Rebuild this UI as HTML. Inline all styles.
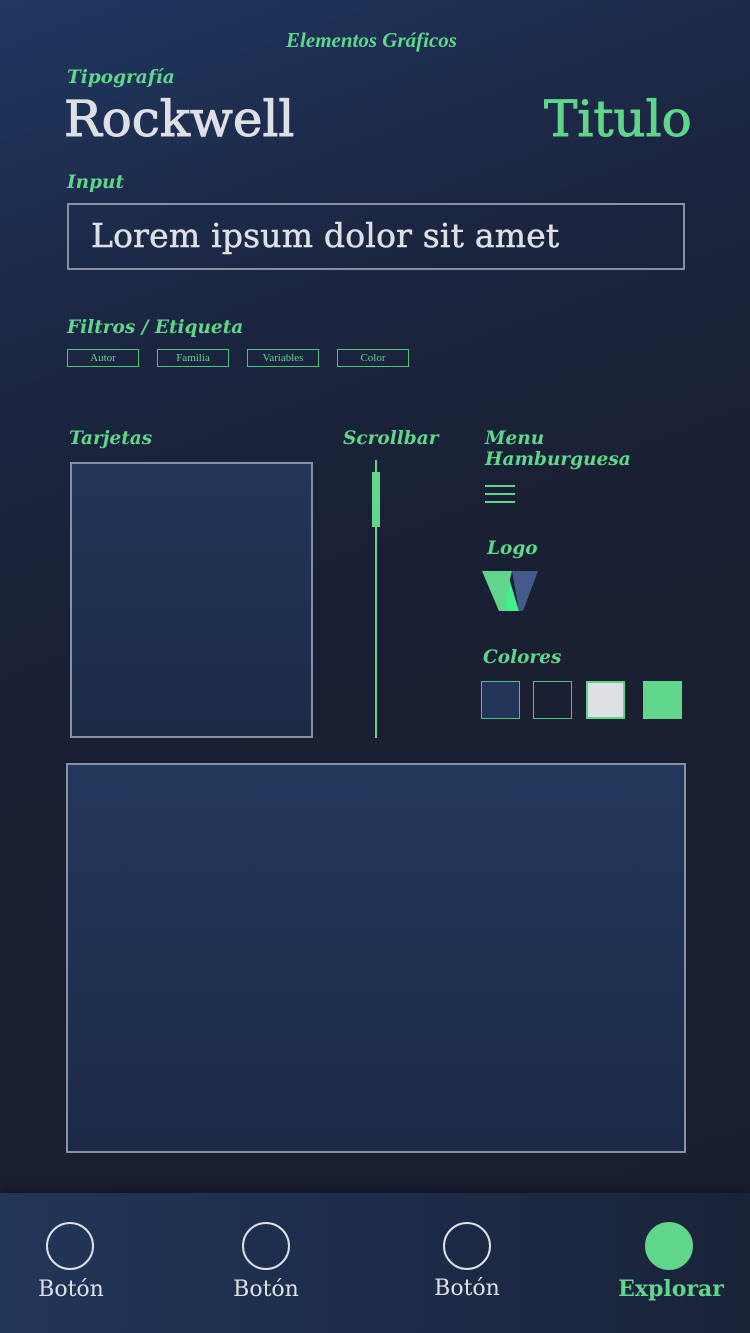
<!DOCTYPE html>
<html><head><meta charset="utf-8"><style>
*{margin:0;padding:0;box-sizing:border-box}
body{width:750px;height:1333px;overflow:hidden;position:relative;background:linear-gradient(160deg,#203761 0%,#1b2540 25%,#1a2033 45%,#1a1f30 100%);font-family:"DejaVu Serif","Liberation Serif",serif}
.a{position:absolute;white-space:nowrap}
.h{color:#5fd68a;font-style:italic;font-weight:bold;font-family:"DejaVu Serif",serif;font-size:18.5px}
.tag{position:absolute;top:349px;width:72px;height:18px;border:1px solid #4fc27c;color:#5fd68a;font-size:11px;text-align:center;line-height:17px;font-family:"Liberation Serif",serif}
.sw{position:absolute;top:681px;width:39px;height:38px}
.nav{position:absolute;left:0;top:1193px;width:750px;height:140px;background:linear-gradient(90deg,#223659,#1c2a47 60%,#1a2238);box-shadow:0 -4px 10px rgba(0,0,0,.3)}
.c{position:absolute;top:29px;width:48px;height:48px;border:2px solid #dfe0e6;border-radius:50%}
.nl{position:absolute;top:84px;color:#dfe0e6;font-size:22px;font-family:"DejaVu Serif",serif;transform:translateX(-50%)}
</style></head><body>
<div class="a" style="left:0;width:743px;text-align:center;top:28px;font-size:21px;color:#5fd68a;font-style:italic;font-weight:bold;font-family:'Liberation Serif',serif">Elementos Gráficos</div>
<div class="a h" style="left:67px;top:67px">Tipografía</div>
<div class="a" style="left:64px;top:90px;font-size:50px;color:#dfe0e6;-webkit-text-stroke:1px #dfe0e6">Rockwell</div>
<div class="a" style="left:544px;top:90px;font-size:50px;color:#5fd68a;-webkit-text-stroke:1px #5fd68a">Titulo</div>
<div class="a h" style="left:67px;top:172px">Input</div>
<div class="a" style="left:67px;top:203px;width:618px;height:67px;border:2px solid #8a90a3"></div>
<div class="a" style="left:91px;top:216px;font-size:33px;color:#dfe0e6;letter-spacing:0.2px;-webkit-text-stroke:0.5px #dfe0e6">Lorem ipsum dolor sit amet</div>
<div class="a h" style="left:67px;top:317px">Filtros / Etiqueta</div>
<div class="tag" style="left:67px">Autor</div>
<div class="tag" style="left:157px">Familia</div>
<div class="tag" style="left:247px">Variables</div>
<div class="tag" style="left:337px">Color</div>
<div class="a h" style="left:69px;top:428px">Tarjetas</div>
<div class="a" style="left:70px;top:462px;width:243px;height:276px;border:2px solid #8a90a3;background:linear-gradient(#233659,#1c2a46)"></div>
<div class="a h" style="left:343px;top:428px">Scrollbar</div>
<div class="a" style="left:375px;top:460px;width:2px;height:278px;background:#5fd68a"></div>
<div class="a" style="left:372px;top:472px;width:8px;height:55px;background:#5fd68a"></div>
<div class="a h" style="left:485px;top:428px;line-height:21px">Menu<br>Hamburguesa</div>
<div class="a" style="left:485px;top:485px;width:30px;height:2px;background:#5fd68a;box-shadow:0 8px 0 #5fd68a,0 16px 0 #5fd68a"></div>
<div class="a h" style="left:487px;top:538px">Logo</div>
<svg class="a" style="left:482px;top:571px" width="58" height="42"><polygon points="0,0 25,0 37,40 17,40" fill="#5fd68a"/><polygon points="30,0 56,0 41,40 37,40" fill="#445a8a"/><polygon points="23,40 37,40 30,20 27,12" fill="#3ff08c"/><polygon points="25,0 30,0 27,12" fill="#5fd68a"/></svg>
<div class="a h" style="left:483px;top:647px">Colores</div>
<div class="sw" style="left:481px;background:#233659;border:1px solid #4fc27c"></div>
<div class="sw" style="left:533px;background:#1a2033;border:1px solid #4fc27c"></div>
<div class="sw" style="left:586px;background:#dfe0e4;border:2px solid #5fd68a"></div>
<div class="sw" style="left:643px;background:#5fd68a"></div>
<div class="a" style="left:66px;top:763px;width:620px;height:390px;border:2px solid #8a90a3;background:linear-gradient(#24385d,#1c2a46)"></div>
<div class="nav">
<div class="c" style="left:46px"></div><div class="nl" style="left:71px">Botón</div>
<div class="c" style="left:242px"></div><div class="nl" style="left:266px">Botón</div>
<div class="c" style="left:443px"></div><div class="nl" style="left:467px;top:83px">Botón</div>
<div class="c" style="left:645px;background:#5fd68a;border-color:#5fd68a"></div><div class="nl" style="left:671px;top:83px;color:#5fd68a;font-weight:bold">Explorar</div>
</div>
</body></html>
